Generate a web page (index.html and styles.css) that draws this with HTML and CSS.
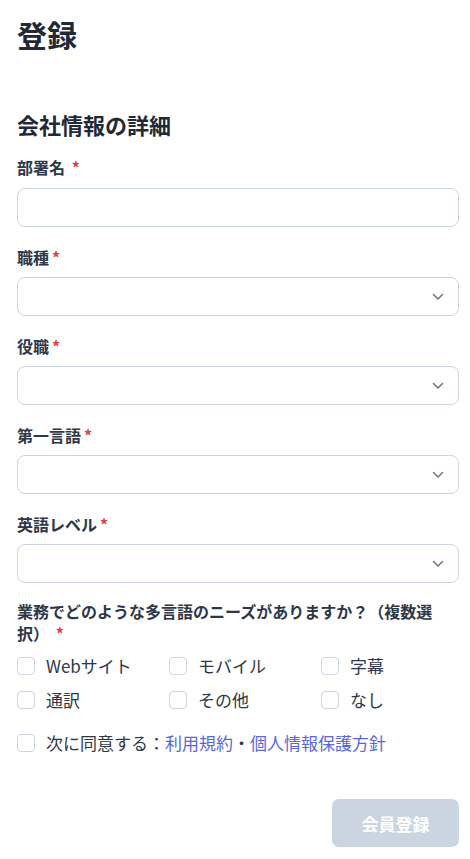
FILE: index.html
```html
<!DOCTYPE html>
<html lang="ja">
<head>
<meta charset="utf-8">
<link rel="stylesheet" href="styles.css">
</head>
<body>
<div class="page">
  <h1 class="title">登録</h1>
  <h2 class="section">会社情報の詳細</h2>

  <div class="field">
    <label class="label">部署名 <span class="req">*</span></label>
    <div class="input"></div>
  </div>

  <div class="field">
    <label class="label">職種<span class="req">*</span></label>
    <div class="input select"><svg class="chev" width="12" height="8" viewBox="0 0 12 8"><path d="M1.5 1.5 L6 6 L10.5 1.5" fill="none" stroke="#6b7280" stroke-width="1.5" stroke-linecap="round" stroke-linejoin="round"/></svg></div>
  </div>

  <div class="field">
    <label class="label">役職<span class="req">*</span></label>
    <div class="input select"><svg class="chev" width="12" height="8" viewBox="0 0 12 8"><path d="M1.5 1.5 L6 6 L10.5 1.5" fill="none" stroke="#6b7280" stroke-width="1.5" stroke-linecap="round" stroke-linejoin="round"/></svg></div>
  </div>

  <div class="field">
    <label class="label">第一言語<span class="req">*</span></label>
    <div class="input select"><svg class="chev" width="12" height="8" viewBox="0 0 12 8"><path d="M1.5 1.5 L6 6 L10.5 1.5" fill="none" stroke="#6b7280" stroke-width="1.5" stroke-linecap="round" stroke-linejoin="round"/></svg></div>
  </div>

  <div class="field">
    <label class="label">英語レベル<span class="req">*</span></label>
    <div class="input select"><svg class="chev" width="12" height="8" viewBox="0 0 12 8"><path d="M1.5 1.5 L6 6 L10.5 1.5" fill="none" stroke="#6b7280" stroke-width="1.5" stroke-linecap="round" stroke-linejoin="round"/></svg></div>
  </div>

  <div class="question">業務でどのような多言語のニーズがありますか？（複数選択） <span class="req">*</span></div>

  <div class="checks">
    <div class="check"><span class="box"></span>Webサイト</div>
    <div class="check"><span class="box"></span>モバイル</div>
    <div class="check"><span class="box"></span>字幕</div>
    <div class="check"><span class="box"></span>通訳</div>
    <div class="check"><span class="box"></span>その他</div>
    <div class="check"><span class="box"></span>なし</div>
  </div>

  <div class="check agree"><span class="box"></span>次に同意する：<a class="link">利用規約</a>・<a class="link">個人情報保護方針</a></div>

  <div class="actions">
    <button class="submit">会員登録</button>
  </div>
</div>
</body>
</html>
```

FILE: styles.css
```css
* { box-sizing: border-box; }
html, body { margin: 0; padding: 0; background: #fff; }
body {
  font-family: "Noto Sans CJK JP", "Noto Sans", sans-serif;
  color: #2d3748;
}
.page {
  padding: 14px 11px 0 17px;
  width: 470px;
}
.title {
  margin: 0;
  font-size: 30px;
  line-height: 40px;
  font-weight: 700;
  color: #1f2937;
}
.section {
  margin: 55px 0 0;
  font-size: 22px;
  line-height: 30px;
  font-weight: 700;
  color: #1f2937;
}
.field { margin-top: 16px; }
.field + .field { margin-top: 18px; }
.label {
  display: block;
  font-size: 16px;
  line-height: 24px;
  font-weight: 700;
  color: #2d3748;
  margin-bottom: 9px;
}
.field + .field .label { margin-bottom: 8px; }
.req { color: #e53e3e; margin-left: 3px; }
.input {
  height: 39px;
  border: 1px solid #cbd5e1;
  border-radius: 8px;
  background: #fff;
}
.select { display: flex; align-items: center; justify-content: flex-end; padding-right: 14px; }
.chev { display: block; }
.question {
  margin-top: 17px;
  font-size: 16px;
  line-height: 22px;
  font-weight: 700;
  color: #2d3748;
  width: 420px;
}
.checks {
  margin-top: 10px;
  display: grid;
  grid-template-columns: 152px 152px 138px;
  row-gap: 10px;
}
.check {
  display: flex;
  align-items: center;
  height: 24px;
  font-size: 17px;
  line-height: 24px;
  color: #2d3748;
}
.box {
  width: 18px;
  height: 18px;
  border: 1px solid #cbd5e1;
  border-radius: 4px;
  margin-right: 11px;
  flex: none;
  background: #fff;
}
.agree { margin-top: 19px; }
.link { color: #5a67d8; }
.actions {
  display: flex;
  justify-content: flex-end;
  margin-top: 44px;
}
.submit {
  width: 127px;
  height: 48px;
  border: none;
  border-radius: 7px;
  background: #cbd5e1;
  color: #fff;
  font-family: "Noto Sans CJK JP", sans-serif;
  font-size: 17px;
  font-weight: 700;
}
```
